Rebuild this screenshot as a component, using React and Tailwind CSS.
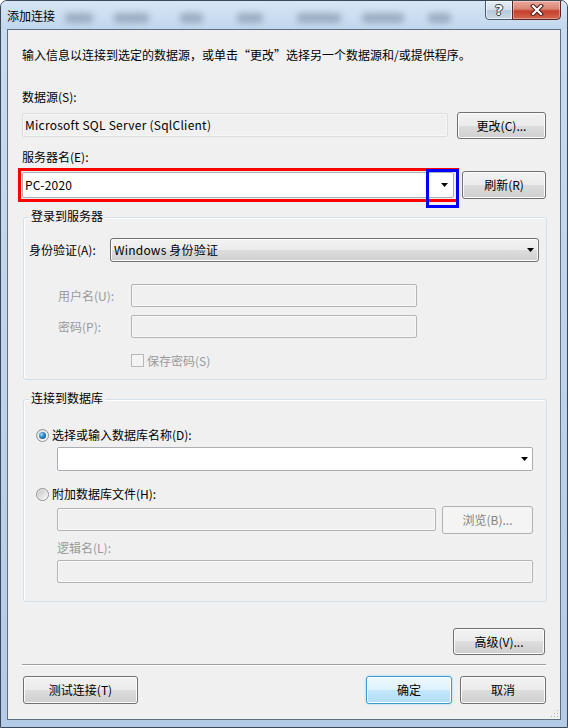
import React from "react";

function Arrow() {
  return (
    <svg width="7" height="4" viewBox="0 0 7 4" className="block">
      <path d="M0 0H7L3.5 4Z" fill="#000" />
    </svg>
  );
}

function Radio({ checked }) {
  return (
    <span className="flex h-[13px] w-[13px] items-center justify-center rounded-full border border-[#8e8f8f] bg-[linear-gradient(135deg,#dcdcdc,#ffffff)]">
      {checked ? (
        <span className="block h-[7px] w-[7px] rounded-full bg-[radial-gradient(circle_at_35%_35%,#9ad8f8_0%,#2a86c8_45%,#0d3d6e_100%)]" />
      ) : (
        <span className="block h-[9px] w-[9px] rounded-full bg-[linear-gradient(135deg,#c8c8c8,#f6f6f6)]" />
      )}
    </span>
  );
}

export default function App() {
  return (
    <div className="relative flex h-[728px] w-[568px] flex-col overflow-hidden rounded-t-[7px] border border-[#3a4858] bg-[linear-gradient(to_bottom,#c9dcf1,#b3cbe6)] font-['Noto_Sans_CJK_SC',sans-serif] text-[12px] leading-[16px] text-black">
      {/* title bar */}
      <div className="flex h-[28px] shrink-0 items-start bg-[linear-gradient(to_bottom,#d6e5f5,#c2d7ee)]">
        <div className="ml-[6px] mt-[7px] h-[16px] leading-[16px] text-[12px] text-black">添加连接</div>
        <div className="ml-[10px] mt-[12px] flex items-center opacity-35">
          <div className="h-[10px] w-[28px] rounded-sm bg-[#44556c] blur-[3px]" />
          <div className="ml-[21px] h-[10px] w-[35px] rounded-sm bg-[#44556c] blur-[3px]" />
          <div className="ml-[31px] h-[10px] w-[23px] rounded-sm bg-[#44556c] blur-[3px]" />
          <div className="ml-[34px] h-[10px] w-[26px] rounded-sm bg-[#44556c] blur-[3px]" />
          <div className="ml-[34px] h-[10px] w-[44px] rounded-sm bg-[#44556c] blur-[3px]" />
          <div className="ml-[21px] h-[10px] w-[42px] rounded-sm bg-[#44556c] blur-[3px]" />
          <div className="ml-[24px] h-[10px] w-[23px] rounded-sm bg-[#44556c] blur-[3px]" />
        </div>
        <div className="flex-1" />
        <div className="-mt-px mr-[6px] flex h-[20px]">
          <div className="flex w-[28px] items-center justify-center rounded-bl-[4px] border border-[#4b5a6c] bg-[linear-gradient(to_bottom,#e6eef7_0%,#d2dfec_48%,#b7c9dc_52%,#c9d8e8_100%)] shadow-[inset_0_0_0_1px_rgba(255,255,255,0.6)]">
            <span className="font-['DejaVu_Sans',sans-serif] text-[14px] font-bold leading-[14px] text-white [text-shadow:0_0_1px_#233,1px_0_0_#344,-1px_0_0_#344,0_1px_0_#344,0_-1px_0_#344]">?</span>
          </div>
          <div className="-ml-px flex w-[49px] items-center justify-center rounded-br-[4px] border border-[#5a2424] bg-[linear-gradient(to_bottom,#e9aa9c_0%,#d98474_45%,#c5402c_55%,#d4664e_100%)] shadow-[inset_0_0_0_1px_rgba(255,255,255,0.35)]">
            <svg width="14" height="12" viewBox="0 0 14 12">
              <path d="M3 2L11 10M11 2L3 10" stroke="#4a1a1a" strokeWidth="4.2" strokeLinecap="square" />
              <path d="M3 2L11 10M11 2L3 10" stroke="#ffffff" strokeWidth="2.2" strokeLinecap="square" />
            </svg>
          </div>
        </div>
      </div>

      {/* body row */}
      <div className="flex min-h-0 flex-1">
        <div className="w-[6px] shrink-0" />
        <div className="flex w-[554px] flex-col border border-[#5e6f82] bg-[#f0f0f0] pl-[14px]">
          <div className="mt-[17px] h-[16px] whitespace-nowrap">输入信息以连接到选定的数据源，或单击“更改”选择另一个数据源和/或提供程序。</div>
          <div className="mt-[26px] h-[16px]">数据源(S):</div>
          <div className="mt-[7px] flex h-[27px] items-start">
            <div className="mt-[1px] flex h-[24px] w-[426px] items-center rounded-[2px] border border-[#dcdcdc] bg-[#f0f0f0] pl-[2px] tracking-[0.25px] shadow-[inset_0_0_0_1px_#f7f7f7]">Microsoft SQL Server (SqlClient)</div>
            <button className="ml-[9px] h-[27px] w-[89px] rounded-[3px] border border-[#707070] bg-[linear-gradient(to_bottom,#f2f2f2_0%,#ebebeb_50%,#dddddd_50%,#cfcfcf_100%)] text-[12px] shadow-[inset_0_0_0_1px_#fcfcfc]">更改(C)...</button>
          </div>
          <div className="mt-[10px] h-[16px]">服务器名(E):</div>
          <div className="relative mt-[6px] flex h-[28px] items-start">
            <div className="mt-[1px] flex h-[26px] w-[432px] items-center rounded-[2px] border border-[#abadb3] bg-white pl-[2px] pr-[5px]">
              <span className="flex-1 tracking-[0.2px]">PC-2020</span>
              <Arrow />
            </div>
            <button className="ml-[8px] h-[28px] w-[84px] rounded-[3px] border border-[#707070] bg-[linear-gradient(to_bottom,#f2f2f2_0%,#ebebeb_50%,#dddddd_50%,#cfcfcf_100%)] text-[12px] shadow-[inset_0_0_0_1px_#fcfcfc]">刷新(R)</button>
            <div className="absolute left-[-4px] top-[-3px] h-[34px] w-[441px] border-[3px] border-[#ff0000]" />
            <div className="absolute left-[404px] top-[-2px] h-[39px] w-[33px] border-[3px] border-[#0000ff]" />
          </div>

          {/* group 1 */}
          <div className="relative ml-[1px] mt-[18px] flex h-[163px] w-[524px] flex-col rounded-[3px] border border-[#d5dfe5] shadow-[inset_1px_1px_0_#ffffff]">
            <div className="absolute left-[5px] top-[-10px] h-[16px] bg-[#f0f0f0] px-[2px]">登录到服务器</div>
            <div className="mt-[20px] flex h-[24px] items-center">
              <div className="w-[86px] pl-[5px]">身份验证(A):</div>
              <div className="flex h-[24px] w-[429px] items-center rounded-[3px] border border-[#707070] bg-[linear-gradient(to_bottom,#f2f2f2_0%,#ebebeb_50%,#dddddd_50%,#cfcfcf_100%)] pl-[3px] pr-[4px] shadow-[inset_0_0_0_1px_#fcfcfc]">
                <span className="flex-1 tracking-[0.2px]">Windows 身份验证</span>
                <Arrow />
              </div>
            </div>
            <div className="mt-[22px] flex h-[23px] items-center">
              <div className="w-[107px] pl-[34px] text-[#9a9a9a]">用户名(U):</div>
              <div className="h-[23px] w-[286px] rounded-[2px] border border-[#b4b4b4] bg-[#f0f0f0] shadow-[inset_0_0_0_1px_#f8f8f8]" />
            </div>
            <div className="mt-[8px] flex h-[23px] items-center">
              <div className="w-[107px] pl-[34px] text-[#9a9a9a]">密码(P):</div>
              <div className="h-[23px] w-[286px] rounded-[2px] border border-[#b4b4b4] bg-[#f0f0f0] shadow-[inset_0_0_0_1px_#f8f8f8]" />
            </div>
            <div className="mt-[16px] flex h-[13px] items-center">
              <div className="ml-[107px] h-[13px] w-[13px] border border-[#b8b8b8] bg-[#f4f4f4]" />
              <div className="ml-[3px] text-[#9a9a9a]">保存密码(S)</div>
            </div>
          </div>

          {/* group 2 */}
          <div className="relative ml-[1px] mt-[19px] flex h-[203px] w-[524px] flex-col rounded-[3px] border border-[#d5dfe5] shadow-[inset_1px_1px_0_#ffffff]">
            <div className="absolute left-[5px] top-[-10px] h-[16px] bg-[#f0f0f0] px-[2px]">连接到数据库</div>
            <div className="mt-[27px] flex h-[16px] items-center pl-[12px]">
              <Radio checked />
              <span className="ml-[3px]">选择或输入数据库名称(D):</span>
            </div>
            <div className="ml-[33px] mt-[4px] flex h-[24px] w-[476px] items-center rounded-[2px] border border-[#abadb3] bg-white pr-[4px]">
              <span className="flex-1" />
              <Arrow />
            </div>
            <div className="mt-[15px] flex h-[16px] items-center pl-[12px]">
              <Radio />
              <span className="ml-[3px]">附加数据库文件(H):</span>
            </div>
            <div className="mt-[4px] flex h-[28px] items-start">
              <div className="ml-[33px] mt-[2px] h-[23px] w-[379px] rounded-[2px] border border-[#b4b4b4] bg-[#f0f0f0] shadow-[inset_0_0_0_1px_#f8f8f8]" />
              <button className="ml-[6px] h-[28px] w-[91px] rounded-[3px] border border-[#adb2b5] bg-[#f4f4f4] text-[12px] text-[#838383]">浏览(B)...</button>
            </div>
            <div className="mt-[6px] h-[16px] pl-[33px] text-[#9a9a9a]">逻辑名(L):</div>
            <div className="ml-[33px] mt-[4px] h-[23px] w-[476px] rounded-[2px] border border-[#b4b4b4] bg-[#f0f0f0] shadow-[inset_0_0_0_1px_#f8f8f8]" />
          </div>

          <button className="ml-[431px] mt-[26px] h-[27px] w-[92px] rounded-[3px] border border-[#707070] bg-[linear-gradient(to_bottom,#f2f2f2_0%,#ebebeb_50%,#dddddd_50%,#cfcfcf_100%)] text-[12px] shadow-[inset_0_0_0_1px_#fcfcfc]">高级(V)...</button>
          <div className="mt-[9px] h-[2px] w-[524px] border-t border-b border-t-[#a0a0a0] border-b-[#ffffff]" />
          <div className="mt-[10px] flex h-[28px] items-start">
            <button className="ml-[1px] h-[28px] w-[115px] rounded-[3px] border border-[#707070] bg-[linear-gradient(to_bottom,#f2f2f2_0%,#ebebeb_50%,#dddddd_50%,#cfcfcf_100%)] text-[12px] shadow-[inset_0_0_0_1px_#fcfcfc]">测试连接(T)</button>
            <button className="ml-[228px] h-[28px] w-[86px] rounded-[3px] border border-[#3c9ad0] bg-[linear-gradient(to_bottom,#eef8fe_0%,#ddf1fc_50%,#c4e8fc_50%,#b0dcf5_100%)] text-[12px] shadow-[inset_0_0_0_1px_#ffffff,0_0_2px_#7fc8f0]">确定</button>
            <button className="ml-[8px] h-[28px] w-[86px] rounded-[3px] border border-[#707070] bg-[linear-gradient(to_bottom,#f2f2f2_0%,#ebebeb_50%,#dddddd_50%,#cfcfcf_100%)] text-[12px] shadow-[inset_0_0_0_1px_#fcfcfc]">取消</button>
          </div>
          <div className="flex flex-1 items-end justify-end pb-[1px] pr-[1px]">
            <svg width="10" height="10" viewBox="0 0 10 10">
              <g fill="#b0b0b0">
                <rect x="8" y="2" width="1" height="1" />
                <rect x="5" y="5" width="1" height="1" />
                <rect x="8" y="5" width="1" height="1" />
                <rect x="2" y="8" width="1" height="1" />
                <rect x="5" y="8" width="1" height="1" />
                <rect x="8" y="8" width="1" height="1" />
              </g>
            </svg>
          </div>
        </div>
        <div className="w-[6px] shrink-0" />
      </div>
      <div className="h-[7px] shrink-0" />
    </div>
  );
}
